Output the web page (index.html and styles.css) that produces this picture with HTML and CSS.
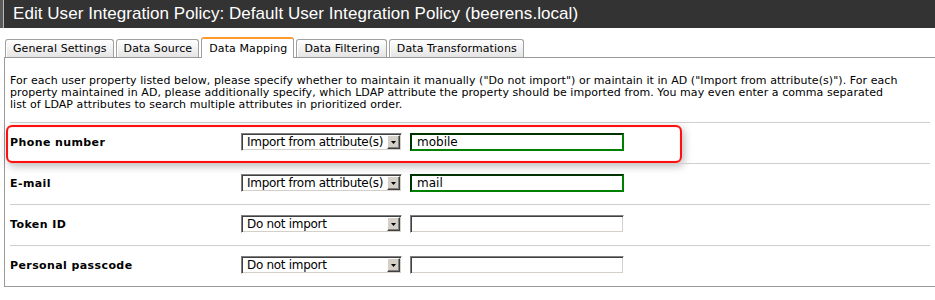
FILE: index.html
```html
<!DOCTYPE html>
<html lang="en">
<head>
    <meta charset="UTF-8">
    <title>Edit User Integration Policy</title>
    <link rel="stylesheet" href="styles.css">
</head>
<body>
    <div class="titlebar">
        <h1>Edit User Integration Policy: Default User Integration Policy (beerens.local)</h1>
    </div>

    <div class="tabs">
        <span class="tab">General Settings</span>
        <span class="tab">Data Source</span>
        <span class="tab active">Data Mapping</span>
        <span class="tab">Data Filtering</span>
        <span class="tab">Data Transformations</span>
    </div>

    <div class="frame">
        <div class="edge"></div>
        <div class="panel">
            <p class="intro">For each user property listed below, please specify whether to maintain it manually ("Do not import") or maintain it in AD ("Import from attribute(s)"). For each<br>property maintained in AD, please additionally specify, which LDAP attribute the property should be imported from. You may even enter a comma separated<br>list of LDAP attributes to search multiple attributes in prioritized order.</p>

            <div class="row">
                <span class="label">Phone number</span>
                <div class="combo"><span class="combo-text">Import from attribute(s)</span><span class="combo-btn"><svg width="5" height="3" viewBox="0 0 5 3"><polygon points="0,0 5,0 2.5,3" fill="#000"/></svg></span></div>
                <input class="field ok" type="text" value="mobile">
                <div class="highlight"></div>
            </div>

            <div class="row">
                <span class="label">E-mail</span>
                <div class="combo"><span class="combo-text">Import from attribute(s)</span><span class="combo-btn"><svg width="5" height="3" viewBox="0 0 5 3"><polygon points="0,0 5,0 2.5,3" fill="#000"/></svg></span></div>
                <input class="field ok" type="text" value="mail">
            </div>

            <div class="row">
                <span class="label">Token ID</span>
                <div class="combo"><span class="combo-text">Do not import</span><span class="combo-btn"><svg width="5" height="3" viewBox="0 0 5 3"><polygon points="0,0 5,0 2.5,3" fill="#000"/></svg></span></div>
                <input class="field" type="text" value="">
            </div>

            <div class="row">
                <span class="label">Personal passcode</span>
                <div class="combo"><span class="combo-text">Do not import</span><span class="combo-btn"><svg width="5" height="3" viewBox="0 0 5 3"><polygon points="0,0 5,0 2.5,3" fill="#000"/></svg></span></div>
                <input class="field" type="text" value="">
            </div>
        </div>
    </div>
</body>
</html>
```

FILE: styles.css
```css
body {
    margin: 0;
    background: #fff;
    font-family: "DejaVu Sans", Verdana, sans-serif;
    font-size: 11px;
    color: #000;
    overflow: hidden;
}

.titlebar {
    height: 28px;
    background: linear-gradient(to right, #5a5a5a 0 3px, #b8b8b8 3px 4px, #333 4px);
    display: flex;
    align-items: center;
    padding-left: 13px;
}
.titlebar h1 {
    margin: 0;
    font-family: "Liberation Sans", Arial, sans-serif;
    font-weight: normal;
    font-size: 17px;
    letter-spacing: 0.05px;
    color: #fff;
    white-space: nowrap;
}

/* tabs */
.tabs {
    display: flex;
    align-items: flex-end;
    gap: 2px;
    margin-top: 9px;
    padding-left: 5px;
    height: 20px;
    position: relative;
    z-index: 1;
}
.tab {
    height: 18px;
    box-sizing: border-box;
    padding: 0 6px 0 7px;
    display: flex;
    align-items: center;
    border: 1px solid #a0a0a0;
    border-bottom: none;
    border-radius: 3px 3px 0 0;
    background: linear-gradient(#fff, #e4e4e4);
    box-shadow: inset 1px 1px 0 #fff;
    letter-spacing: 0.1px;
    white-space: nowrap;
}
.tab.active {
    height: 21px;
    margin-bottom: -1px;
    background: #fff;
    border-top: 2px solid #ff9a2e;
    padding-bottom: 1px;
}

/* content panel */
.frame {
    display: flex;
    padding-left: 2px;
}
.edge {
    width: 1px;
    background: #a8a8a8;
    margin-right: 2px;
}
.panel {
    width: 932px;
    flex-shrink: 0;
    box-sizing: border-box;
    border: 1px solid #9a9a9a;
    padding: 17px 5px 0;
}
.intro {
    margin: 0 0 11px;
    line-height: 12px;
    letter-spacing: 0.06px;
    white-space: nowrap;
}

.row {
    position: relative;
    display: flex;
    align-items: center;
    border-top: 1px solid #cfcfcf;
    padding: 10px 0 12px;
}
.label {
    width: 231px;
    font-weight: bold;
    letter-spacing: 0.4px;
}

.combo {
    width: 161px;
    height: 18px;
    box-sizing: border-box;
    display: flex;
    align-items: center;
    border: 1px solid;
    border-color: #808080 #fff #fff #808080;
    box-shadow: inset 1px 1px 0 #404040, inset -1px -1px 0 #d4d0c8;
    padding: 1px;
    font-size: 12px;
    letter-spacing: -0.3px;
}
.combo-text {
    flex: 1;
    padding-left: 4px;
    white-space: nowrap;
    overflow: hidden;
}
.combo-btn {
    width: 13px;
    height: 14px;
    box-sizing: border-box;
    display: flex;
    align-items: center;
    justify-content: center;
    background: #d4d0c8;
    border: 1px solid;
    border-color: #fff #404040 #404040 #fff;
    box-shadow: inset -1px -1px 0 #808080;
}

.field {
    margin: 0 0 0 8px;
    width: 214px;
    height: 18px;
    box-sizing: border-box;
    padding: 0 0 0 6px;
    font-family: "DejaVu Sans", Verdana, sans-serif;
    font-size: 12px;
    color: #000;
    outline: none;
    border: 1px solid;
    border-color: #808080 #fff #fff #808080;
    box-shadow: inset 1px 1px 0 #404040, inset -1px -1px 0 #d4d0c8;
}
.field.ok {
    border: 2px solid;
    border-color: #003300 #008000 #008000 #003300;
    box-shadow: none;
    padding-left: 5px;
}

/* red annotation around the first row */
.highlight {
    position: absolute;
    top: 2px;
    left: -4px;
    width: 676px;
    height: 38px;
    box-sizing: border-box;
    border: 2px solid #ff1010;
    border-radius: 6px;
    box-shadow: 2px 3px 8px rgba(0, 0, 0, 0.28), inset 0 0 1px rgba(255, 0, 0, 0.5);
    pointer-events: none;
}
```
